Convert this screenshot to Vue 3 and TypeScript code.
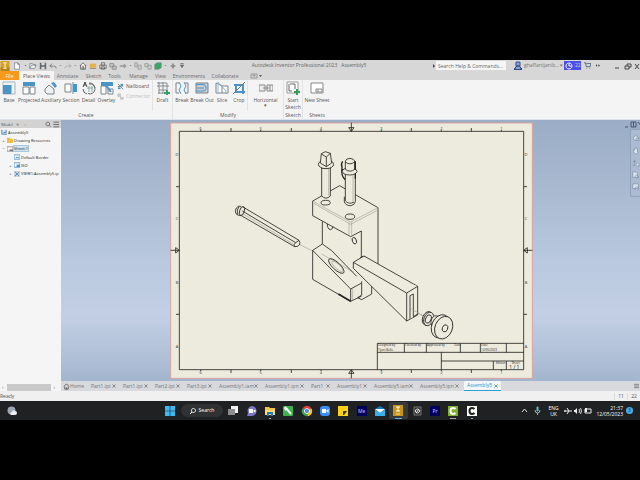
<script setup lang="ts">
import { ref } from 'vue'

// A shape is path data, fill, stroke and an optional stroke width.
type Shape = [string, string, string, number?]
interface Tool { label: string; cls: string; icon: Shape[] }

const N = 'none'
const G = '#7d8388'
const B = '#4a94c8'

const quick: { name: string; cls: string; icon: Shape[] }[] = [
  { name: 'New', cls: 'q11', icon: [['M2 1h4l2 2v6h-6zM6 1v2h2', '#fff', G]] },
  { name: 'New options', cls: 'q5', icon: [['M3 4h4l-2 2z', '#555', N]] },
  { name: 'Open', cls: 'q10', icon: [['M1 8V2h3l1 1h3v2M1 8l2-4h6l-2 4z', '#f6f6f6', G]] },
  { name: 'Save', cls: 'q10', icon: [['M1 1h8v8h-8z', '#61666c', N], ['M3 1h4v3h-4zM3 6h4v3h-4z', '#dcdcdc', N]] },
  { name: 'Undo', cls: 'q10', icon: [['M4 2L1 5l3 2M1 5h5q3 0 3 3', N, '#777']] },
  { name: 'Undo list', cls: 'q5', icon: [['M3 4h4l-2 2z', '#777', N]] },
  { name: 'Redo', cls: 'q10', icon: [['M6 2l3 3-3 2M9 5H4q-3 0-3 3', N, '#aaa']] },
  { name: 'Redo list', cls: 'q5', icon: [['M3 4h4l-2 2z', '#888', N]] },
  { name: 'Home', cls: 'q10', icon: [['M1 5l4-4 4 4M2 4v5h6V4M4 9V6h2v3', '#fff', '#555']] },
  { name: 'Drawing', cls: 'q10', icon: [['M1 2h8v5h-8z', '#e8b04a', N], ['M1 8h8', N, '#8a7650']] },
  { name: 'Print', cls: 'q10', icon: [['M1 4h8v4h-8zM3 1h4v3h-4zM3 6h4v3h-4z', '#ddd', '#666']] },
  { name: 'Copy model', cls: 'q10', icon: [['M1 2h5v4h-5zM4 5h5v4h-5z', '#c2c6c9', '#888']] },
  { name: 'Return', cls: 'q10', icon: [['M1 5h7M6 3l2 2-2 2', N, '#999', 2]] },
  { name: 'Return list', cls: 'q5', icon: [['M3 4h4l-2 2z', '#777', N]] },
  { name: 'Update', cls: 'q10', icon: [['M1 1h3v5h-3zM5 4h4v5h-4z', '#ccc', '#999']] },
  { name: 'Update all', cls: 'q10', icon: [['M1 2h4v4h-4zM5 4h4v5h-4z', '#c7d0c8', '#999']] },
  { name: 'Appearance', cls: 'q10', icon: [['M1 3l3-2h5v6l-3 2h-5z', '#35a765', '#7b8c81']] },
  { name: 'Appearance list', cls: 'q5', icon: [['M3 4h4l-2 2z', '#777', N]] },
  { name: 'Add', cls: 'q10', icon: [['M5 2v6M2 5h6', N, '#888', 2]] },
  { name: 'Customize', cls: 'q8', icon: [['M3 4h4l-2 3zM3 2h4', '#666', '#666']] },
]

const tabs = [
  { label: 'Annotate', cls: 't-annotate' },
  { label: 'Sketch', cls: 't-sketch' },
  { label: 'Tools', cls: 't-tools' },
  { label: 'Manage', cls: 't-manage' },
  { label: 'View', cls: 't-view' },
  { label: 'Environments', cls: 't-env' },
  { label: 'Collaborate', cls: 't-collab' },
]

const createTools: Tool[] = [
  { label: 'Base', cls: 'w18', icon: [['M1 1h12v12h-12z', N, '#a5b2b8', 1], ['M1 4h9v9h-9z', B, N], ['M10 3v10M1 3h9', N, '#e8eef2']] },
  { label: 'Projected', cls: 'w22', icon: [['M1 1h12v4h-12z', B, N], ['M1 6h6v7h-6zM8 6h5v7h-5z', '#fff', G]] },
  { label: 'Auxiliary', cls: 'w22', icon: [['M7 2l3-1 3 4-2 2z', B, N], ['M1 8l4-4 5 4v5h-7l-2-2z', '#eef0f2', G]] },
  { label: 'Section', cls: 'w18', icon: [['M1 3h6v8h-6z', '#fff', G], ['M9 3h4v8h-4z', B, N], ['M9 1v12', N, B]] },
  { label: 'Detail', cls: 'w17', icon: [['M7 3a5 5 0 1 1-1 9.500M7 2q5 0 6 5', N, '#666'], ['M5 7h6M7 5v6M10 5v6', N, '#8aa'], ['M1 6l2-5 2 5M2 4h2', N, '#444'], ['M1 8q0 4 4 5', N, '#666']] },
  { label: 'Overlay', cls: 'w19', icon: [['M1 1h12v4h-12z', B, N], ['M1 5h5v8h-5zM8 8h5v5h-5z', '#fff', G], ['M5 3l6 8', N, B, 2]] },
]
const draft: Tool = { label: 'Draft', cls: 'w20', icon: [['M1 2h10M1 5h12M3 9h9M2 12h5M3 1v12M7 1v12M11 2v6', N, '#858b90'], ['M11 9v5M8 12h6', N, '#35a765', 2]] }
const modifyTools: Tool[] = [
  { label: 'Break', cls: 'w18', icon: [['M1 2v10h3M13 2v10h-3M1 2h3M10 2h3', N, G], ['M4 1l2 4-2 4 2 4M9 1l2 4-2 4 2 4', N, B]] },
  { label: 'Break Out', cls: 'w22', icon: [['M1 2h12v10h-12z', '#c9ced2', G], ['M1 4q9-2 10 2t-4 4H1M2 7h7', N, B]] },
  { label: 'Slice', cls: 'w18', icon: [['M1 2l6 3v7H1zM7 5h6v7H7', '#fff', G], ['M3 1v12M3 1l8 9v3', N, '#8ab6d8']] },
  { label: 'Crop', cls: 'w16', icon: [['M4 3v8h9M2 4h9v9', N, B, 2], ['M1 13L13 1', N, '#777']] },
]

const docs = [
  { name: 'Part1.ipt', cls: 'd-part' },
  { name: 'Part1.ipt', cls: 'd-part' },
  { name: 'Part2.ipt', cls: 'd-part' },
  { name: 'Part3.ipt', cls: 'd-part' },
  { name: 'Assembly1.iam', cls: 'd-long' },
  { name: 'Assembly1.ipn', cls: 'd-long' },
  { name: 'Part1', cls: 'd-short' },
  { name: 'Assembly1', cls: 'd-mid' },
  { name: 'Assembly5.iam', cls: 'd-long' },
  { name: 'Assembly5.ipn', cls: 'd-long' },
  { name: 'Assembly5', cls: 'd-mid active' },
]

const apps: { name: string; mark?: string; icon: Shape[]; text?: string; color?: string }[] = [
  { name: 'Task view', icon: [['M4 1h7v7h-7z', '#f1f1f1', N], ['M1 4h7v6h-7z', '#8d8d8d', N]] },
  { name: 'Chat', icon: [['M6 1a5 5 0 1 1-1 10H1l1-3a5 5 0 0 1 4-7z', '#7a78c8', N], ['M3 4h4v4h-4zM7.500 5.500l2-1v3l-2-1z', '#fff', N]] },
  { name: 'File Explorer', mark: 'dot', icon: [['M1 2h4l1 1h5v7h-10z', '#f5c443', N], ['M1 5h10v5h-10z', '#ffdb75', N], ['M3 7h6v4h-2v-2h-2v2h-2z', '#2679b8', N]] },
  { name: 'CorelDRAW', icon: [['M1 2q0-1 1-1h8q1 0 1 1v8q0 1-1 1h-8q-1 0-1-1z', '#39b54a', N], ['M3 2l6 7', N, '#fff', 2], ['M2 2l4 2-3 2z', '#fff', N]] },
  { name: 'Chrome', icon: [['M6 6L1.500 3.500a5 5 0 0 1 9 0z', '#e34133', N], ['M6 6h5a5 5 0 0 1-6 5z', '#fbc116', N], ['M6 6l4.500-2.500a5 5 0 0 1-4 7.500z', '#fbc116', N], ['M6 6l1 5a5 5 0 0 1-5.500-7.500z', '#34a853', N], ['M6 3.500a2.500 2.500 0 1 1-.1 0z', '#4285f4', '#fff']] },
  { name: 'Zoom', icon: [['M4 1h4q3 0 3 3v4q0 3-3 3H4q-3 0-3-3V4q0-3 3-3z', '#3c8cf5', N], ['M3 4h4v4h-4zM7.500 5.500l2-1.500v4l-2-1.500z', '#fff', N]] },
  { name: 'Sticky Notes', icon: [['M1 1h10v10H1z', '#fcd116', N], ['M6 6h4L7 10H6z', '#3d3410', N]] },
  { name: 'Media Encoder', text: 'Me', color: 'adobe', icon: [] },
  { name: 'Mail', icon: [['M1 4l5-3 5 3v7h-10z', '#1579c0', N], ['M1 4h10l-5 4z', '#fff', N], ['M1 5l5 3 5-3v6h-10z', '#35b1ee', N]] },
  { name: 'Inventor', mark: 'bar', icon: [['M1 0h10v11h-10z', '#c8951b', N], ['M4 2h4M6 2v4M4 6h4', N, '#fff'], ['M4 9h4', N, '#f3dc9a']] },
  { name: 'Player', icon: [['M3 2h7v8H3z', '#2c2c2c', '#777'], ['M6.500 4a2 2 0 1 1-.1 0zM5 8l3-4', N, '#eee', 1]] },
  { name: 'Premiere', text: 'Pr', color: 'adobe', icon: [] },
  { name: 'Camtasia', mark: 'grey', icon: [['M1 1h10v10h-10z', '#7bb02e', N], ['M8.500 4q-1-1-2.500-1-2.500 0-2.500 3t2.500 3q1.500 0 2.500-1', N, '#fff', 2]] },
  { name: 'Recorder', mark: 'dot', icon: [['M1 1h10v10h-10z', '#fbfff8', N], ['M8.500 4q-1-1-2.500-1-2.500 0-2.500 3t2.500 3q1.500 0 2.500-1', N, '#222', 2]] },
]

const navIcons: string[] = [
  'M5 1a3 3 0 1 1-.1 0zM5 4h4v3h-4z',
  'M3 8q-2-3-1-4h1V2h1V1h2v1h1v5l-1 2z',
  'M3 1v5M1 3h4M1 8h3M7 5a2 2 0 1 1-.1 0zM8 8l1 1',
  'M1 1h4l2 2v5h-6zM6 5a2 2 0 1 1-.1 0zM8 8l1 1',
  'M1 1h7v6h-7zM6 5a2 2 0 1 1-.1 0zM8 8l1 1',
]

const columns = [
  { n: '6', x: 107 }, { n: '5', x: 287 }, { n: '4', x: 468 },
  { n: '3', x: 649 }, { n: '2', x: 829 }, { n: '1', x: 1009 },
]
const rows = [{ n: 'D', y: 110 }, { n: 'C', y: 302 }, { n: 'B', y: 492 }, { n: 'A', y: 685 }]
const colTicks = [198, 379, 739, 919]
const rowTicks = [206, 589]

const query = ref('Search Help & Commands...')
</script>

<template>
  <div class="screen">
    <header class="titlebar">
      <svg class="brand" viewBox="0 0 10 11"><path d="M0 0h10v11H0z" fill="#d9a21c" /><path d="M0 7h10v4H0z" fill="#b98412" /><path d="M3 2h4M5 2v6M3 8h4" fill="none" stroke="#fff" /></svg>
      <div class="quick">
        <button v-for="q in quick" :key="q.name" :class="q.cls" :aria-label="q.name">
          <svg viewBox="0 0 10 10"><path v-for="(s, i) in q.icon" :key="i" :d="s[0]" :fill="s[1]" :stroke="s[2]" :stroke-width="s[3] ?? 1" /></svg>
        </button>
      </div>
      <h1><span>Autodesk Inventor Professional 2023</span><span>Assembly5</span></h1>
      <div class="account">
        <svg class="arrow" viewBox="0 0 4 6"><path d="M1 1l2 2-2 2z" fill="#444" /></svg>
        <input v-model="query" aria-label="Search help" />
        <svg class="user" viewBox="0 0 8 9"><path d="M0 7h8v2H0z" fill="#2e4d8f" /><path d="M2 1h4v4H2zM1 8q0-3 3-3t3 3" fill="#8ba0c8" stroke="#33508c" /></svg>
        <button class="name">ghaffartijanib... <i>▾</i></button>
        <button class="trial"><svg viewBox="0 0 8 8"><path d="M4 1a3 3 0 1 1-.1 0zM4 2v2h2" fill="none" stroke="#fff" /></svg>22</button>
        <svg class="cart" viewBox="0 0 9 9"><path d="M0 1h2l1 5h5l1-4H3M3 8h1M7 8h1" fill="#c9dbec" stroke="#456" /></svg>
        <svg class="more" viewBox="0 0 5 5"><path d="M0 1l2 1.500-2 1.500zM3 1l2 1.500-2 1.500z" fill="#444" /></svg>
        <svg class="wins" viewBox="0 0 28 8"><path d="M3 6h4M13 4h4v3h-4zM15 4V2h4v3h-2M23 2l4 5M27 2l-4 5" fill="none" stroke="#444" /></svg>
      </div>
    </header>

    <nav class="tabs">
      <button class="file">File</button>
      <button class="current">Place Views</button>
      <button v-for="t in tabs" :key="t.label" :class="t.cls">{{ t.label }}</button>
      <button class="t-icon" aria-label="Ribbon display"><svg viewBox="0 0 12 6"><path d="M1 1h6v4H1zM3 2h2v1H3z" fill="none" stroke="#999" /><path d="M9 2h3L10.500 4z" fill="#555" /></svg></button>
    </nav>

    <section class="ribbon">
      <div class="panel">
        <div class="tools">
          <button v-for="t in createTools" :key="t.label" class="tool" :class="t.cls">
            <svg viewBox="0 0 14 14"><path v-for="(s, i) in t.icon" :key="i" :d="s[0]" :fill="s[1]" :stroke="s[2]" :stroke-width="s[3] ?? 1" /></svg>
            <span>{{ t.label }}</span>
          </button>
          <div class="stack">
            <button><svg viewBox="0 0 8 8"><path d="M1 1l6 6M1 4h3" stroke="#777" /><path d="M4 1h3v3H4z" fill="#4a94c8" /><path d="M1 5h3v2H1z" fill="#4a94c8" /></svg>Nailboard</button>
            <button disabled><svg viewBox="0 0 8 8"><path d="M1 1h3v3H1zM3 3l4 4M4 5h3v2H4z" fill="#ccc" stroke="#c5c5c5" /></svg>Connector</button>
          </div>
          <button class="tool split" :class="draft.cls">
            <svg viewBox="0 0 14 14"><path v-for="(s, i) in draft.icon" :key="i" :d="s[0]" :fill="s[1]" :stroke="s[2]" :stroke-width="s[3] ?? 1" /></svg>
            <span>Draft</span>
          </button>
        </div>
        <h2>Create</h2>
      </div>
      <div class="panel">
        <div class="tools">
          <button v-for="t in modifyTools" :key="t.label" class="tool" :class="t.cls">
            <svg viewBox="0 0 14 14"><path v-for="(s, i) in t.icon" :key="i" :d="s[0]" :fill="s[1]" :stroke="s[2]" :stroke-width="s[3] ?? 1" /></svg>
            <span>{{ t.label }}</span>
          </button>
          <button class="tool split w36">
            <svg viewBox="0 0 14 14"><path d="M0 4h6v6H0zM8 4h6v6H8z" fill="#eee" stroke="#888" /><path d="M4 7h6M11 4v6" stroke="#888" /></svg>
            <span>Horizontal</span><i>▾</i>
          </button>
        </div>
        <h2>Modify</h2>
      </div>
      <div class="panel">
        <div class="tools">
          <button class="tool w18">
            <svg viewBox="0 0 14 14"><path d="M1 1h11v11H1z" fill="#fff" stroke="#999" /><path d="M3 3v7h3M4 3l5 0v5" fill="none" stroke="#666" /><path d="M11 8v6M8 11h6" stroke="#2f9e58" stroke-width="2" /></svg>
            <span>Start Sketch</span>
          </button>
        </div>
        <h2>Sketch</h2>
      </div>
      <div class="panel open">
        <div class="tools">
          <button class="tool w28">
            <svg viewBox="0 0 14 14"><path d="M1 2h12v10H1z" fill="#fff" stroke="#888" /><path d="M6 8h6v3H6zM8 8v3" fill="none" stroke="#888" /></svg>
            <span>New Sheet</span>
          </button>
        </div>
        <h2>Sheets</h2>
      </div>
    </section>

    <main class="work">
      <aside class="browser">
        <div class="head">
          <button>Model</button><button aria-label="Close panel">✕</button><button class="plus" aria-label="Add panel">+</button>
          <svg viewBox="0 0 16 7"><path d="M3 1a2 2 0 1 1-.1 0zM4.500 4.500L6 6M9 1h6M9 3.500h6M9 6h6" fill="none" stroke="#666" /></svg>
        </div>
        <ul>
          <li><svg class="root" viewBox="0 0 7 7"><path d="M0 1h7v6H0z" fill="#d8e6f1" /><path d="M1 1v5h6M3 4h3V1" fill="none" stroke="#4280ad" /></svg>Assembly5</li>
          <li class="l1"><b>+</b><svg viewBox="0 0 7 7"><path d="M0 1h3l1 1h3v5H0z" fill="#efbf3f" /></svg>Drawing Resources</li>
          <li class="l1"><b>−</b><svg viewBox="0 0 7 7"><path d="M0 1h7v5H0z" fill="#fff" stroke="#888" /><path d="M3 4h4v2H3z" fill="#777" /></svg><mark>Sheet:1</mark></li>
          <li class="l2"><b></b><svg viewBox="0 0 7 7"><path d="M0 1h7v5H0zM2 4h4" fill="#fff" stroke="#4a94c8" /></svg>Default Border</li>
          <li class="l2"><b>+</b><svg viewBox="0 0 7 7"><path d="M0 1h7v5H0z" fill="#fff" stroke="#4a94c8" /><path d="M3 3h4v3H3z" fill="#4a94c8" /></svg>ISO</li>
          <li class="l2"><b>+</b><svg viewBox="0 0 7 7"><path d="M0 0h7v7H0z" fill="#cbd6df" /><path d="M1 1l5 5M6 1L1 6" stroke="#4a84ad" /></svg>VIEW1:Assembly5.ip</li>
        </ul>
        <div class="scroll"><span>‹</span><i></i><span>›</span></div>
      </aside>

      <div class="stage">
        <div class="canvas">
          <svg class="sheet" viewBox="15 12 1089 771">
            <rect x="17" y="15" width="1085" height="766" fill="#ecebdd" stroke="#dca3a0" stroke-width="3" />
            <g class="ink">
              <rect x="43" y="40" width="1033" height="715" />
              <path v-for="x in colTicks" :key="'c' + x" :d="`M${x} 30v10M${x} 755v10`" />
              <path v-for="c in columns" :key="'k' + c.n" :d="`M${c.x} 36v4M${c.x} 755v4`" />
              <path v-for="y in rowTicks" :key="'r' + y" :d="`M33 ${y}h10M1076 ${y}h10`" />
              <path d="M559 14v26M551 29h16l-8 11zM559 781v-26M551 766h16l-8-11zM17 397h26M32 389v16l11-8zM1102 397h-26M1087 389v16l-11-8z" />
            </g>
            <g class="zone">
              <template v-for="c in columns" :key="c.n"><text :x="c.x" y="37">{{ c.n }}</text><text :x="c.x" y="769">{{ c.n }}</text></template>
              <template v-for="r in rows" :key="r.n"><text x="36" :y="r.y + 5">{{ r.n }}</text><text x="1083" :y="r.y + 5">{{ r.n }}</text></template>
            </g>

            <!-- Long pin -->
            <g class="ink">
              <path d="M234 267L402 367q5 7 1 14-5 6-14 5L229 293M232 279L392 374M402 367l-10 7-5 6 2 6" />
              <path d="M228 265q-9-3-14 5-6 9-1 17 3 5 15 6" />
              <ellipse cx="231" cy="279" rx="7" ry="14" transform="rotate(18 231 279)" />
              <path d="M222 266q-7 8-5 24" />
            </g>
            <path class="faint" d="M405 380L443 399M470 408L565 462M738 572L778 596M230 285L387 380" />

            <!-- Clamp body and top plate -->
            <g class="ink">
              <path d="M443 249L524 203L639 269V440M443 249V293L557 356L589 339V437M472 310V378" />
              <path d="M487 318q0 15 9 17 7-1 8-9" />
              <ellipse cx="568" cy="368" rx="6" ry="10" transform="rotate(-20 568 368)" />
              <path d="M585 421q4-7 12-6 7 2 9 8" />
              <ellipse cx="482" cy="254" rx="14" ry="7" />
              <ellipse cx="555" cy="296" rx="14" ry="8" />
            </g>
            <path class="faint" d="M443 249L557 312L639 269M446 256L557 319L637 277M552 312V352M560 312V352" />

            <!-- Lower jaw -->
            <g class="ink">
              <path d="M443 397L472 378L500 398L575 475M443 397V484L557 550L590 534M443 397L557 513L588 496M557 513V550" />
              <path d="M520 528L557 550" stroke-width="5" />
              <ellipse cx="514" cy="444" rx="30" ry="11" transform="rotate(43 514 444)" />
              <path d="M590 490V531l-12 8 12 6 30-17v-24" />
            </g>
            <g class="faint">
              <ellipse cx="517" cy="445" rx="22" ry="7" transform="rotate(43 517 445)" />
              <path d="M563 512V547" />
            </g>

            <!-- Screws -->
            <g class="ink solid">
              <path d="M470 150V234q13 13 26 0V150z" />
              <ellipse cx="483" cy="139" rx="23" ry="13" />
              <path d="M466 135L469 107L481 101L496 106L500 135L484 146zM469 108L484 117L496 106M484 117V146" />
              <path d="M533 130q-6 8-2 18-4 26 10 37M531 148q-2 9 7 10" stroke-width="4" />
              <path d="M538 236V252q6 12 19 11 12-2 14-12V165H541V248q10 13 26 4" />
              <ellipse cx="554" cy="160" rx="22" ry="11" />
              <path d="M541 154V129q3-8 14-8 11 1 14 8v25q-14 11-28 0zM541 132q14 11 28 0" />
              <path d="M571 130V156M571 166v16" stroke-width="4" />
            </g>
            <path class="faint" d="M491 152V234M564 170V250" />

            <!-- Wedge -->
            <g class="ink solid">
              <path d="M565 433L597 414L758 505V591L725 609L565 451z" />
              <path d="M565 433L725 525L758 505M725 525V609M735 603V533L745 528V596L758 588" />
            </g>
            <path class="faint" d="M738 572L778 596" />

            <!-- Washer and knob -->
            <g class="ink solid">
              <ellipse cx="787" cy="601" rx="14" ry="21" transform="rotate(22 787 601)" />
              <ellipse cx="791" cy="603" rx="14" ry="21" transform="rotate(22 791 603)" />
              <ellipse cx="790" cy="603" rx="8" ry="13" transform="rotate(22 790 603)" />
              <path d="M818 594q-11-4-17 6-7 13 0 24l20 12V596z" />
              <ellipse cx="827" cy="625" rx="27" ry="36" transform="rotate(22 827 625)" />
              <ellipse cx="836" cy="629" rx="26" ry="35" transform="rotate(22 836 629)" />
              <ellipse cx="840" cy="631" rx="8" ry="11" transform="rotate(22 840 631)" />
            </g>

            <!-- Title block -->
            <g class="ink">
              <path d="M637 755V676H1076M637 703H1076M829 703V755M829 729H1076M718 676v27M784 676v27M886 676v27M946 676v27M1024 676v27M985 729v26M1024 729v26" />
            </g>
            <g class="small">
              <text x="639" y="685">Designed by</text><text x="639" y="699">Tijani Bello</text>
              <text x="720" y="685">Checked by</text><text x="786" y="685">Approved by</text>
              <text x="868" y="685">Date</text><text x="948" y="685">Date</text><text x="948" y="699">12/05/2023</text>
              <text x="992" y="737">Edition</text><text x="1040" y="737">Sheet</text>
            </g>
            <text class="count" x="1048" y="752">1 / 1</text>
          </svg>
          <svg class="mdi" viewBox="0 0 16 8"><path d="M1 6h3M7 1h5v5H7zM9.500 1v5M14 1l4 5" fill="none" stroke="#47566d" /></svg>
          <div class="navbar">
            <svg v-for="d in navIcons" :key="d" viewBox="0 0 10 10"><path :d="d" fill="#dbe3ee" stroke="#8494ab" /></svg>
          </div>
        </div>
        <nav class="docs">
          <button class="home"><svg viewBox="0 0 8 8"><path d="M1 4l3-3 3 3M2 4v3h4V4M4 7V5" fill="none" stroke="#555" /></svg>Home</button>
          <div v-for="(d, i) in docs" :key="i" class="doc" :class="d.cls">
            <button>{{ d.name }}</button><button class="close" :aria-label="'Close ' + d.name"><svg viewBox="0 0 5 5"><path d="M0.500 0.500l4 4M4.500 0.500l-4 4" stroke="currentColor" /></svg></button>
          </div>
          <svg class="list" viewBox="0 0 6 6"><path d="M0 1h6M0 3h6M0 5h6" stroke="#777" /></svg>
        </nav>
      </div>
    </main>

    <footer class="status"><span>Ready</span><span class="num">11</span><span class="num">22</span></footer>

    <div class="taskbar">
      <svg class="weather" viewBox="0 0 10 10"><circle cx="4.500" cy="4.500" r="4" fill="#9da5b3" /><path d="M4 9q-2-2 1-3 1-3 3-1 2 0 2 2t-2 2z" fill="#e9eef5" /></svg>
      <div class="dock">
        <button class="start" aria-label="Start"><svg viewBox="0 0 10 10"><path d="M0 0h4.700v4.700H0zM5.300 0H10v4.700H5.300zM0 5.300h4.700V10H0zM5.300 5.300H10V10H5.300z" fill="#3fb9f1" /></svg></button>
        <button class="find"><svg viewBox="0 0 6 6"><path d="M3.500 0.500a2 2 0 1 1-.1 0zM2 4L0 6" fill="none" stroke="#fff" /></svg>Search</button>
        <div class="apps">
          <button v-for="a in apps" :key="a.name" :aria-label="a.name" :class="[a.mark, { running: a.name === 'Inventor' }]">
            <span v-if="a.text" :class="a.color">{{ a.text }}</span>
            <svg v-else viewBox="0 0 12 12"><path v-for="(s, i) in a.icon" :key="i" :d="s[0]" :fill="s[1]" :stroke="s[2]" :stroke-width="s[3] ?? 1" /></svg>
          </button>
        </div>
      </div>
      <div class="tray">
        <svg class="up" viewBox="0 0 7 7"><path d="M1 5l2.500-3L6 5" fill="none" stroke="#ddd" /></svg>
        <svg class="mic" viewBox="0 0 7 9"><path d="M3 1h1v4H3z" fill="#6bc" stroke="#6bc" /><path d="M1 4q0 3 2.500 3T6 4M3.500 7v2" fill="none" stroke="#9bb" /></svg>
        <span class="lang">ENG<br />UK</span>
        <svg class="net" viewBox="0 0 8 8"><path d="M0 4h8M3 1l2 3-2 3M1 3v2" fill="none" stroke="#eee" /></svg>
        <svg class="net" viewBox="0 0 8 8"><path d="M0 3h1l2-2v6L1 5H0z" fill="#eee" /><path d="M5 2q1 2 0 4M6.500 1q2 3 0 6" fill="none" stroke="#ddd" /></svg>
        <svg class="net" viewBox="0 0 8 8"><path d="M1 2h6v4H1z" fill="none" stroke="#eee" /><path d="M1 1h2v4H1z" fill="#eee" /></svg>
        <span class="clock">21:37<br />12/05/2023</span>
        <span class="badge">3</span>
      </div>
    </div>
  </div>
</template>

<style>
body { margin: 0; background: #000; }
</style>

<style scoped>
.screen {
  box-sizing: border-box;
  min-height: 100vh;
  padding: 60px 0;
  background: #000;
  color: #555;
  font-family: "Open Sans", "Noto Sans", sans-serif;
  font-size: 5px;
  line-height: 7px;
  overflow: hidden;
}
button, input { font: inherit; color: inherit; background: none; border: 0; padding: 0; margin: 0; white-space: nowrap; }
svg { display: block; flex: none; }
h1, h2, ul { margin: 0; padding: 0; font: inherit; }
i { font-style: normal; }

.titlebar { display: flex; align-items: center; height: 11px; background: #d7d7d7; }
.brand { width: 10px; height: 10px; }
.quick { display: flex; align-items: center; }
.quick svg { width: 8px; height: 8px; margin: 0 auto; }
.q5 { width: 5px; }
.q8 { width: 8px; }
.q10 { width: 10px; }
.q11 { width: 13px; }
.quick .q5 svg { width: 5px; height: 5px; }
.titlebar h1 { flex: 1; display: flex; justify-content: center; gap: 4px; color: #666; }
.account { display: flex; align-items: center; }
.arrow { width: 4px; height: 6px; }
.account input { width: 70px; height: 9px; padding: 0 2px; box-sizing: border-box; background: #f6f6f6; color: #666; }
.user { width: 8px; height: 9px; margin: 0 2px 0 8px; }
.name { width: 40px; text-align: left; color: #777; }
.trial { display: flex; align-items: center; gap: 2px; width: 17px; height: 9px; padding-left: 1px; background: #4d50e8; color: #ccd; box-sizing: border-box; }
.trial svg { width: 8px; height: 8px; }
.cart { width: 7px; height: 7px; margin: 0 5px 0 3px; }
.more { width: 4px; height: 5px; }
.wins { width: 28px; height: 8px; margin-left: 12px; }

.tabs { display: flex; height: 9px; background: #d7d7d7; color: #6b6b6b; }
.tabs button { text-align: center; line-height: 8px; }
.tabs .file { width: 19px; background: #f8981d; color: #fff; }
.tabs .current { width: 35px; background: #f4f4f4; color: #555; }
.t-annotate { width: 27px; }
.t-sketch { width: 25px; }
.t-tools { width: 17px; }
.t-manage { width: 31px; }
.t-view { width: 13px; }
.t-env { width: 44px; }
.t-collab { width: 28px; }
.t-icon { margin-left: 11px; }
.t-icon svg { width: 12px; height: 6px; }

.ribbon { display: flex; height: 40px; background: #f4f4f4; border-bottom: 1px solid #dde2ea; box-sizing: border-box; }
.panel { display: flex; flex-direction: column; border-right: 1px solid #e3e3e3; }
.panel.open { border: 0; }
.panel h2 { text-align: center; line-height: 8px; }
.tools { display: flex; flex: 1; }
.tool { display: flex; flex-direction: column; align-items: center; padding-top: 1px; white-space: normal; overflow: visible; }
.tool svg { width: 14px; height: 14px; margin-bottom: 2px; }
.tool span { text-align: center; }
.tool i { line-height: 3px; }
.split { border-left: 1px solid #e3e3e3; }
.w16 { width: 16px; }
.w17 { width: 17px; }
.w18 { width: 18px; }
.w19 { width: 19px; }
.w20 { width: 20px; }
.w22 { width: 22px; white-space: nowrap; }
.w28 { width: 28px; white-space: nowrap; }
.w36 { width: 36px; }
.stack { display: flex; flex-direction: column; gap: 2px; width: 35px; padding: 2px 0 0 1px; }
.stack button { display: flex; align-items: center; gap: 2px; height: 8px; color: #555; }
.stack button:disabled { color: #c0c0c0; }
.stack svg { width: 7px; height: 7px; }

.work { display: flex; }
.browser { display: flex; flex-direction: column; width: 61px; background: #f5f5f5; overflow: hidden; }
.head { display: flex; align-items: center; height: 8px; gap: 3px; padding-left: 1px; background: #d2d2d2; font-size: 4px; }
.head button:first-child { width: 12px; }
.head .plus { margin: 0 auto 0 2px; }
.head svg { width: 15px; height: 7px; margin-right: 1px; }
.browser ul { display: grid; grid-template-rows: repeat(6, 1fr); height: 50px; list-style: none; color: #333; font-family: "Noto Sans", sans-serif; font-size: 4px; }
.browser li { display: flex; align-items: center; gap: 1px; white-space: nowrap; padding-left: 1px; }
.browser li svg { width: 6px; height: 6px; }
.browser b { width: 5px; font-weight: 400; text-align: center; }
.browser .l2 { padding-left: 8px; }
.browser mark { background: #cfe3f0; color: #333; outline: 1px solid #a6c8de; line-height: 5px; }
.scroll { display: flex; align-items: center; gap: 3px; height: 8px; margin-top: auto; padding: 0 2px; }
.scroll i { width: 44px; height: 7px; background: #c9c9c9; }

.stage { flex: 1; min-width: 0; display: flex; flex-direction: column; }
.canvas {
  position: relative;
  display: flex;
  justify-content: center;
  padding: 2px 0 2px 2px;
  background: linear-gradient(180deg, #9bacc6 0%, #a9bad1 28%, #bac9df 55%, #c2cfe4 75%, #b4c3da 88%, #a3b5ce 100%);
}
.sheet { width: 363px; max-width: 100%; }
.ink { fill: none; stroke: #242422; stroke-width: 2.5; stroke-linejoin: round; }
.solid { fill: #ecebdd; }
.faint { fill: none; stroke: #a3a39a; stroke-width: 2; }
.zone { fill: #333; font-size: 12px; text-anchor: middle; }
.small { fill: #222; font-size: 9px; }
.count { fill: #222; font-size: 15px; text-anchor: middle; }
.mdi { position: absolute; top: 1px; right: 0; width: 16px; height: 8px; }
.navbar { position: absolute; top: 9px; right: 0; display: flex; flex-direction: column; justify-content: space-around; align-items: center; width: 9px; height: 60px; padding: 3px 0; background: #acbbd1; border: 1px solid #8fa1bc; border-right: 0; border-radius: 2px 0 0 2px; }
.navbar svg { width: 8px; height: 8px; }

.docs { display: flex; align-items: center; height: 10px; background: #d7d9dd; color: #777; }
.home { display: flex; align-items: center; width: 30px; padding-left: 2px; }
.home svg { width: 7px; height: 7px; }
.doc { display: flex; align-items: center; justify-content: space-between; box-sizing: border-box; height: 10px; padding-right: 7px; }
.close svg { width: 4px; height: 4px; }
.d-part { width: 32px; }
.d-long { width: 46px; }
.d-short { width: 26px; }
.d-mid { width: 37px; }
.doc.active { margin-left: -2px; padding: 0 3px; background: #f3f6f9; border-bottom: 1px solid #2f9fd0; color: #3096c8; }
.list { width: 5px; height: 6px; margin: 0 1px 0 auto; }

.status { display: flex; align-items: center; height: 10px; background: #f0f0f0; color: #555; }
.status span:first-child { margin-right: auto; }
.num { width: 12px; text-align: center; border-left: 1px solid #ddd; }

.taskbar { display: grid; grid-template-columns: 1fr auto 1fr; align-items: center; height: 19px; background: #202122; color: #fff; }
.weather { width: 10px; height: 10px; margin-left: 7px; }
.dock { display: flex; align-items: center; margin-left: 2px; }
.start { width: 18px; }
.start svg { width: 10px; height: 10px; margin: 0 auto; }
.find { display: flex; align-items: center; justify-content: center; gap: 3px; width: 42px; height: 13px; margin: 0 1px 0 2px; border-radius: 7px; background: #303132; }
.find svg { width: 6px; height: 6px; }
.apps { display: grid; grid-template-columns: repeat(14, 1fr); width: 257px; }
.apps button { position: relative; display: flex; align-items: center; justify-content: center; height: 17px; }
.apps svg { width: 12px; height: 12px; }
.adobe { width: 10px; height: 10px; line-height: 10px; background: #00005b; color: #a9a5ff; font-weight: 600; }
.running { background: #38393a; border-radius: 2px; }
.dot::after, .bar::after, .grey::after { content: ""; position: absolute; bottom: 0; width: 2px; height: 1px; background: #aaa; }
.bar::after { width: 7px; background: #5cb7e4; }
.grey::after { width: 6px; }
.tray { display: flex; align-items: center; justify-content: flex-end; line-height: 6px; }
.up { width: 7px; height: 7px; margin-right: 6px; }
.mic { width: 7px; height: 9px; margin-right: 7px; }
.lang { width: 11px; margin-right: 5px; text-align: center; }
.net { width: 8px; height: 8px; margin-right: 2px; }
.clock { width: 29px; text-align: right; margin-right: 3px; }
.badge { width: 7px; height: 7px; margin-right: 7px; border-radius: 4px; background: #44aee8; color: #124; line-height: 7px; text-align: center; }
</style>
